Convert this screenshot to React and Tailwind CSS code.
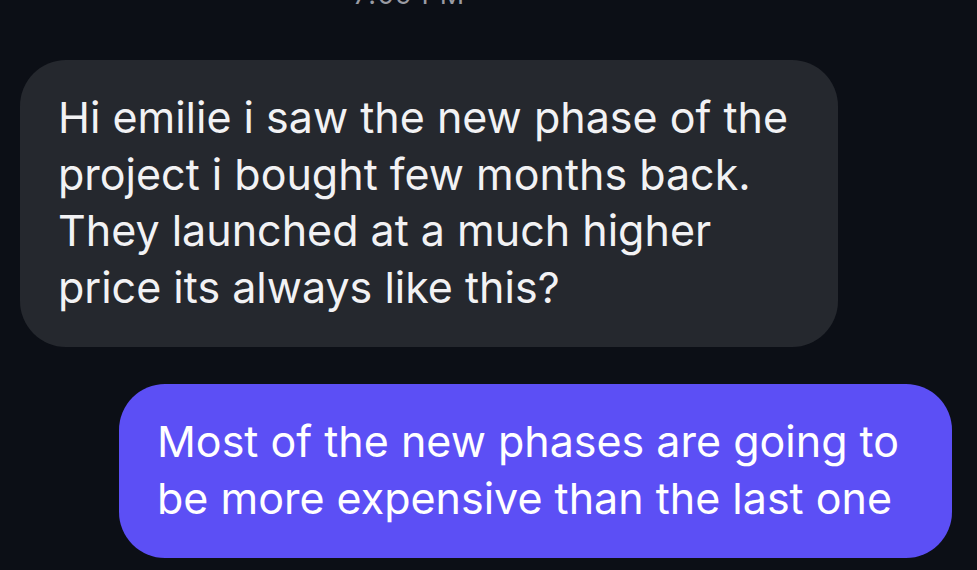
export default function App() {
  return (
    <div
      className="w-[977px] h-[570px] overflow-hidden bg-[#0c0f16] flex flex-col"
      style={{ fontFamily: 'Inter, "Noto Sans", sans-serif' }}
    >
      <div className="h-[60px] relative">
        <div className="absolute left-[353px] top-[-20px] text-[27px] text-[#9a9ba3] leading-[30px] tracking-[1px]">
          7:09 PM
        </div>
      </div>
      <div className="ml-[20px] w-[818px] h-[287px] rounded-[46px] bg-[#25282e] px-[38px] pt-[29px] pb-[33px] text-[43px] leading-[56.5px] text-[#f2f2f4]">
        Hi emilie i saw the new phase of the
        <br />
        project i bought few months back.
        <br />
        They launched at a much higher
        <br />
        price its always like this?
      </div>
      <div className="mt-[37px] ml-[119px] w-[833px] h-[174px] rounded-[46px] bg-[#5c4ff5] px-[38px] pt-[29px] pb-[33px] text-[43px] leading-[56.5px] text-white">
        Most of the new phases are going to
        <br />
        be more expensive than the last one
      </div>
    </div>
  );
}
